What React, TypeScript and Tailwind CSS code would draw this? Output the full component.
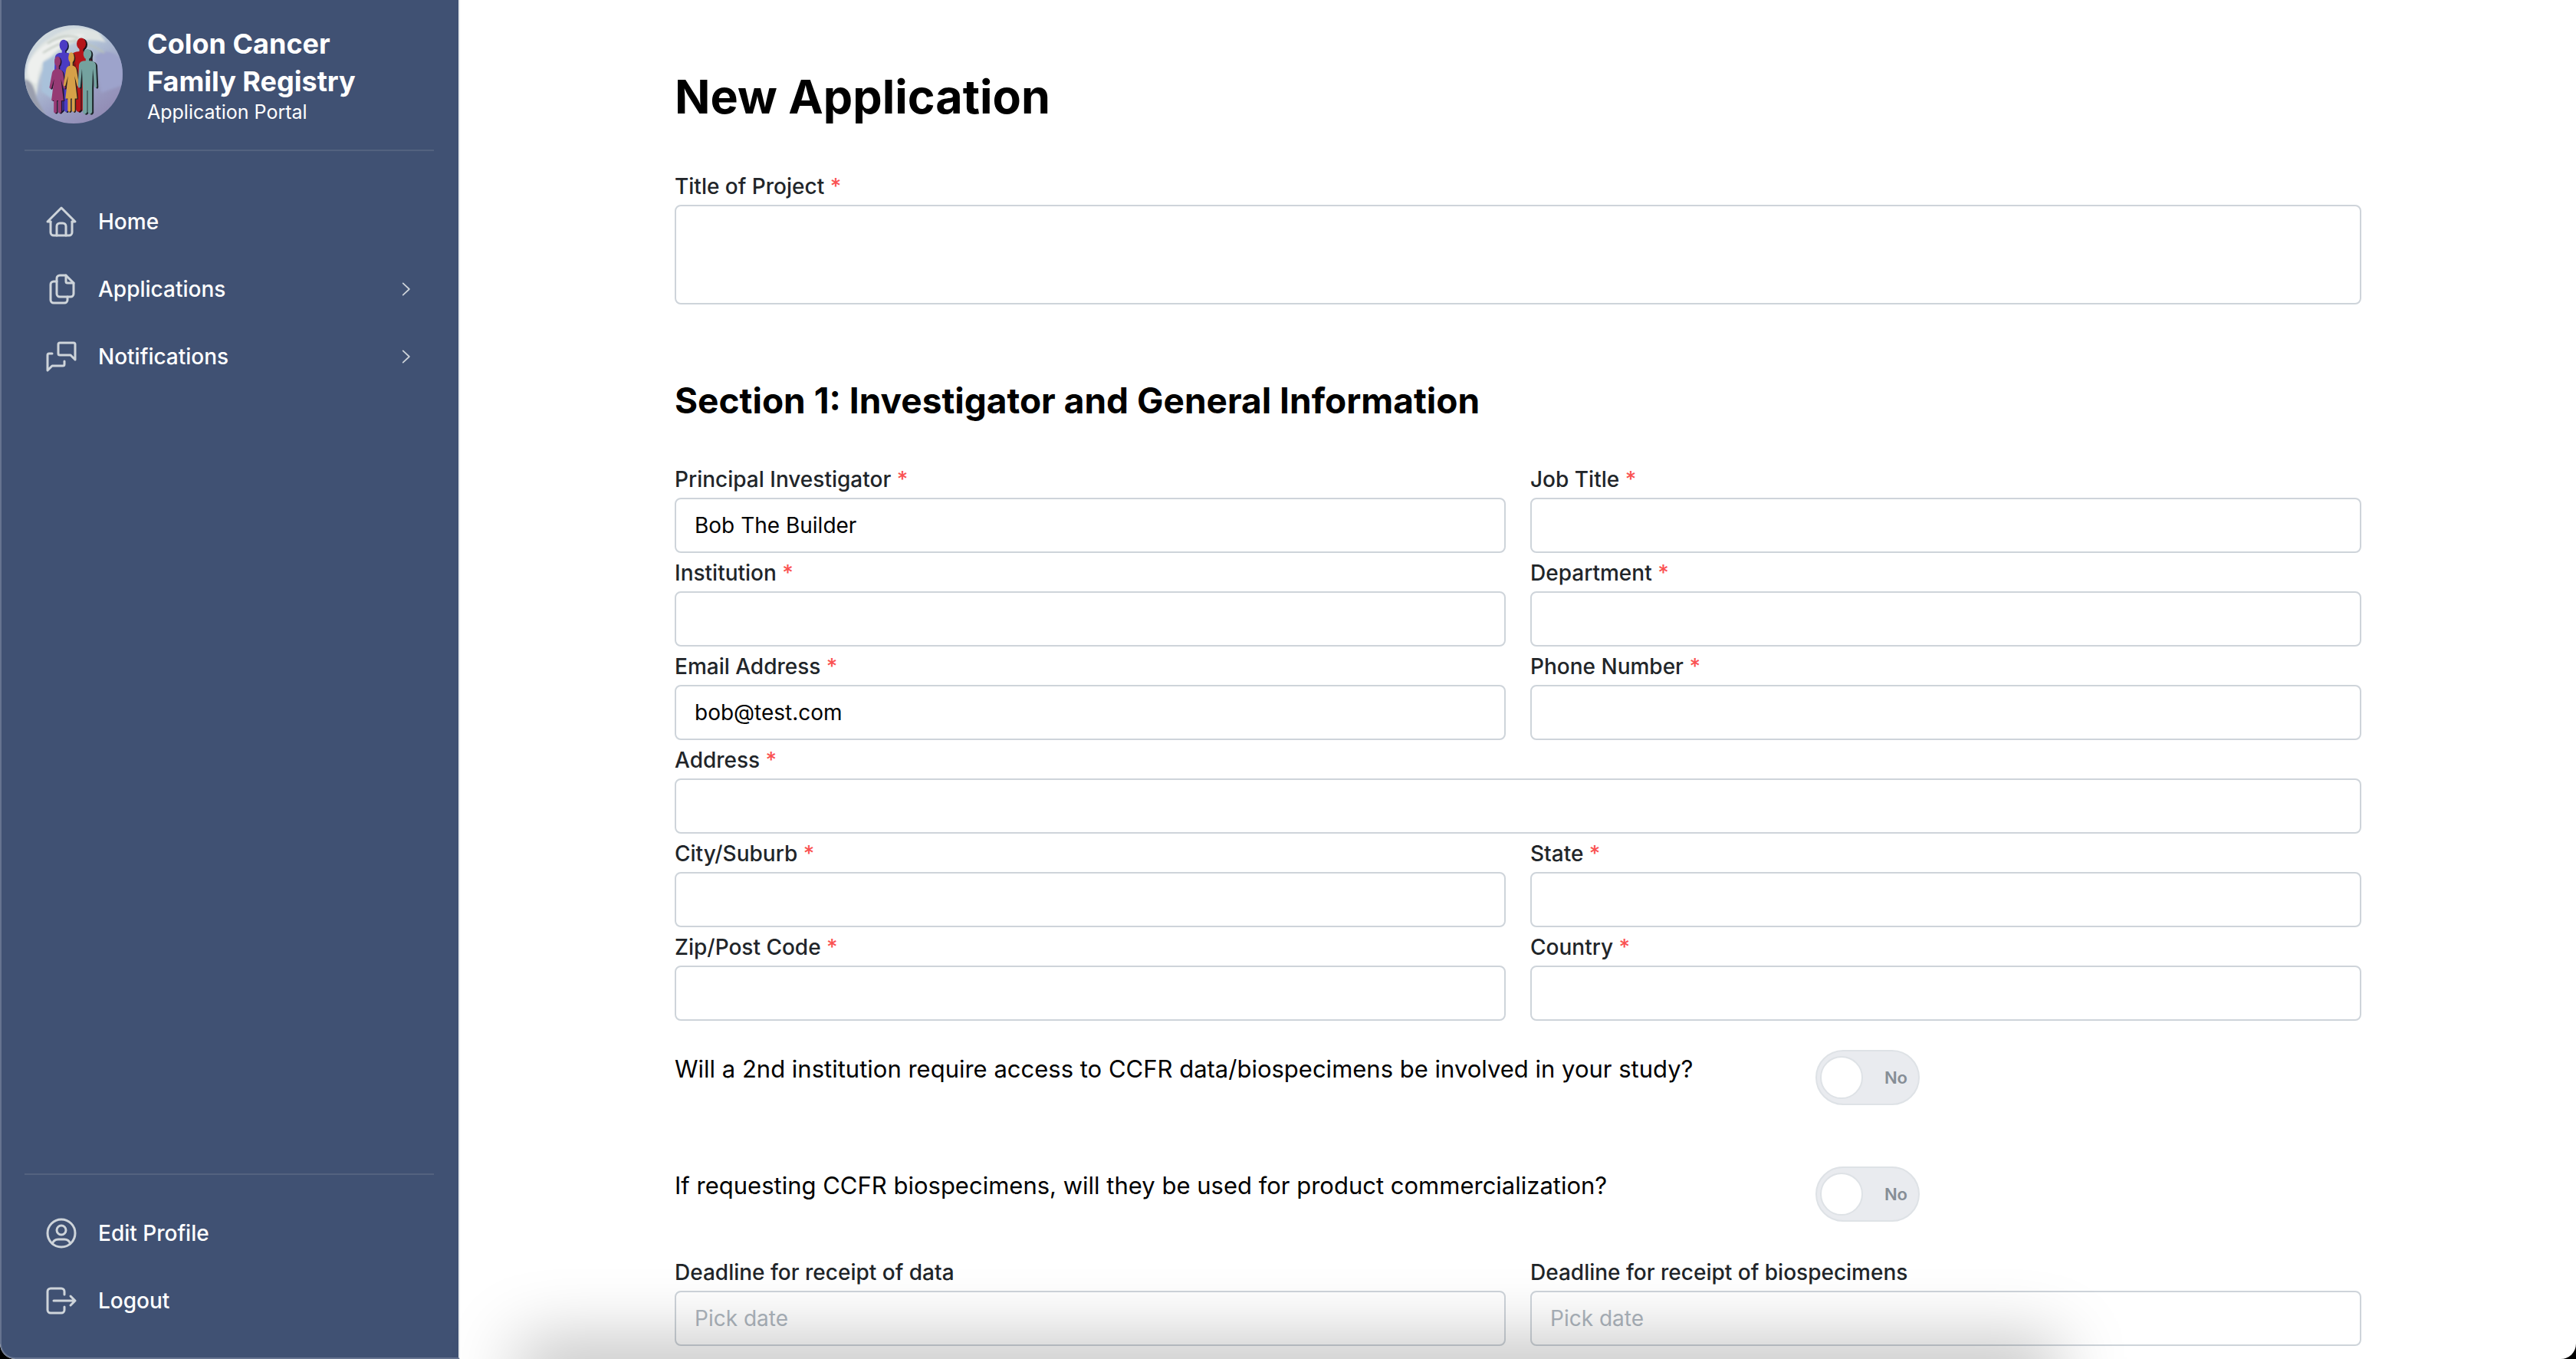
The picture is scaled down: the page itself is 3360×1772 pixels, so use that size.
import { useState } from "react";
import type { ReactNode } from "react";

function Icon({ children, className = "size-12" }: { children: ReactNode; className?: string }) {
  return (
    <svg
      viewBox="0 0 24 24"
      fill="none"
      stroke="currentColor"
      strokeWidth={1.5}
      strokeLinecap="round"
      strokeLinejoin="round"
      className={`shrink-0 text-[#ced4da] ${className}`}
      aria-hidden="true"
    >
      {children}
    </svg>
  );
}

const icons = {
  home: (
    <Icon>
      <path d="M5 12H3l9-9 9 9h-2" />
      <path d="M5 12v7a2 2 0 0 0 2 2h10a2 2 0 0 0 2-2v-7" />
      <path d="M9 21v-6a2 2 0 0 1 2-2h2a2 2 0 0 1 2 2v6" />
    </Icon>
  ),
  files: (
    <Icon>
      <path d="M15 3v4a1 1 0 0 0 1 1h4" />
      <path d="M18 17h-7a2 2 0 0 1-2-2V5a2 2 0 0 1 2-2h4l5 5v7a2 2 0 0 1-2 2z" />
      <path d="M16 17v2a2 2 0 0 1-2 2H7a2 2 0 0 1-2-2V9a2 2 0 0 1 2-2h2" />
    </Icon>
  ),
  messages: (
    <Icon>
      <path d="M21 14l-3-3h-7a1 1 0 0 1-1-1V4a1 1 0 0 1 1-1h9a1 1 0 0 1 1 1v10" />
      <path d="M14 15v2a1 1 0 0 1-1 1H6l-3 3V11a1 1 0 0 1 1-1h2" />
    </Icon>
  ),
  user: (
    <Icon>
      <circle cx="12" cy="12" r="9" />
      <circle cx="12" cy="10" r="3" />
      <path d="M6.168 18.849A4 4 0 0 1 10 16h4a4 4 0 0 1 3.834 2.855" />
    </Icon>
  ),
  logout: (
    <Icon>
      <path d="M14 8V6a2 2 0 0 0-2-2H5a2 2 0 0 0-2 2v12a2 2 0 0 0 2 2h7a2 2 0 0 0 2-2v-2" />
      <path d="M7 12h14l-3-3m0 6l3-3" />
    </Icon>
  ),
};

function Logo() {
  return (
    <svg viewBox="0 0 128 128" className="size-32 shrink-0" role="img" aria-label="Colon Cancer Family Registry">
      <defs>
        <linearGradient id="sky" x1="0.1" y1="0" x2="0.75" y2="1">
          <stop offset="0" stopColor="#dfe5e3" />
          <stop offset="0.4" stopColor="#b3c3d6" />
          <stop offset="0.7" stopColor="#9a9fc4" />
          <stop offset="1" stopColor="#9189b2" />
        </linearGradient>
        <clipPath id="disc">
          <circle cx="64" cy="64" r="64" />
        </clipPath>
        <filter id="soft" x="-20%" y="-20%" width="140%" height="140%">
          <feGaussianBlur stdDeviation="1.6" />
        </filter>
        <g id="man">
          <ellipse cx="0" cy="0" rx="6" ry="7.500" />
          <path d="M-2.500 6h5v4q9 0 10 6l1.500 32q-1 4-3.500 1l-2.500-27L7 50v36q-3 6-6.500 0V54h-1v32q-3.500 6-6.500 0V50L-8 22l-2.500 27q-2.500 3-3.500-1l1.500-32q1-6 10-6z" />
        </g>
        <g id="woman">
          <ellipse cx="0" cy="0" rx="4.500" ry="6.500" />
          <path d="M-2 5h4v5q5 1 6 5l4 19q-1 3-3 1l-4-12 4 28H5.500v15q-2 3-4.500 0V51h-2v15q-2.500 3-4.500 0V51H-9l4-28-4 12q-2 2-3-1l4-19q1-4 6-5z" />
        </g>
      </defs>
      <g clipPath="url(#disc)">
        <rect width="128" height="128" fill="url(#sky)" />
        <g filter="url(#soft)">
          <path d="M0 70Q4 32 34 16q28-20 62-8l10 14Q74 14 50 30 24 44 18 74l-4 28Q2 88 0 70z" fill="#dfe4e2" />
          <path d="M4 50Q30 8 80 12q-30 10-46 28Q18 46 16 76 2 74 4 50z" fill="#eef0ee" />
          <path d="M0 70q12 2 16 26l14 26Q2 112 0 70z" fill="#9a9fae" />
          <path d="M24 48l14-8 6 30-8 26-14-10z" fill="#a9c1da" />
          <path d="M92 40q20-14 36 8v30l-28 10z" fill="#9da3cb" />
          <path d="M30 24q20-14 40-8M24 36q24-16 44-16M78 24q12 2 26 12" stroke="#b9c2b9" strokeWidth="2" fill="none" />
        </g>
        <use href="#man" transform="translate(52.500 27) scale(0.9 0.98)" fill="#161a33" />
        <use href="#man" transform="translate(51 26) scale(0.9 0.98)" fill="#4b3bc4" />
        <use href="#man" transform="translate(76 25)" fill="#1c1018" />
        <use href="#man" transform="translate(74 24)" fill="#b5151a" />
        <use href="#woman" transform="translate(44.500 48) scale(0.88 1)" fill="#26162c" />
        <use href="#woman" transform="translate(43 47) scale(0.88 1)" fill="#963a74" />
        <use href="#woman" transform="translate(62.500 43) scale(0.85 1.05)" fill="#2a2018" />
        <use href="#woman" transform="translate(61 42) scale(0.85 1.05)" fill="#d6a048" />
        <use href="#man" transform="translate(84 38.500) scale(0.88)" fill="#1c2428" />
        <use href="#man" transform="translate(82 37.500) scale(0.88)" fill="#74a29f" />
      </g>
    </svg>
  );
}

function NavItem({ icon, label, expandable }: { icon: ReactNode; label: string; expandable?: boolean }) {
  const body = (
    <>
      {icon}
      <span className="grow text-left">{label}</span>
      {expandable && (
        <Icon className="size-7">
          <path d="M10 5.5l7 6.500-7 6.500" />
        </Icon>
      )}
    </>
  );
  const cls = "flex h-[88px] w-full items-center gap-6 px-6 text-[28px] leading-[44px] font-medium text-white";
  return (
    <li>
      {expandable ? (
        <button type="button" aria-expanded="false" className={cls}>{body}</button>
      ) : (
        <a href="#" className={cls}>{body}</a>
      )}
    </li>
  );
}

type FieldProps = {
  id: string;
  label: string;
  required?: boolean;
  value?: string;
  placeholder?: string;
  multiline?: boolean;
  wide?: boolean;
};

function Field({ id, label, required, value, placeholder, multiline, wide }: FieldProps) {
  const box =
    "block w-full rounded-lg border-2 border-[#ced4da] bg-white px-6 text-[28px] text-black placeholder:text-[#adb5bd] outline-none";
  return (
    <div className={wide ? "col-span-2" : ""}>
      <label htmlFor={id} className="block text-[28px] leading-[48px] font-medium text-[#212529]">
        {label}
        {required && <span className="text-[#fa5252]"> *</span>}
      </label>
      {multiline ? (
        <textarea id={id} defaultValue={value} className={`${box} h-[130px] resize-none`} />
      ) : (
        <input id={id} type="text" defaultValue={value} placeholder={placeholder} className={`${box} h-[72px]`} />
      )}
    </div>
  );
}

function Question({ id, text }: { id: string; text: string }) {
  const [on, setOn] = useState(false);
  return (
    <div className="grid h-[72px] grid-cols-12 gap-x-8">
      <label htmlFor={id} className="col-span-8 text-[31px] leading-[50px] text-black">
        {text}
      </label>
      <div className="relative col-span-4 h-[72px] w-[136px]">
        <input
          id={id}
          type="checkbox"
          role="switch"
          checked={on}
          onChange={() => setOn(!on)}
          className="block h-full w-full appearance-none rounded-full border-2 border-[#dee2e6] bg-[#e9ebef] checked:bg-[#228be6]"
        />
        <span
          className={`pointer-events-none absolute top-2 size-14 rounded-full border-2 border-[#dee2e6] bg-white ${on ? "right-1.5" : "left-1.5"}`}
        />
        <span
          className={`pointer-events-none absolute top-0 text-[22px] leading-[72px] font-semibold ${on ? "left-4 text-white" : "right-4 text-[#868e96]"}`}
        >
          {on ? "Yes" : "No"}
        </span>
      </div>
    </div>
  );
}

const contactFields: FieldProps[] = [
  { id: "pi", label: "Principal Investigator", value: "Bob The Builder", required: true },
  { id: "job", label: "Job Title", required: true },
  { id: "institution", label: "Institution", required: true },
  { id: "department", label: "Department", required: true },
  { id: "email", label: "Email Address", value: "bob@test.com", required: true },
  { id: "phone", label: "Phone Number", required: true },
  { id: "address", label: "Address", required: true, wide: true },
  { id: "city", label: "City/Suburb", required: true },
  { id: "state", label: "State", required: true },
  { id: "zip", label: "Zip/Post Code", required: true },
  { id: "country", label: "Country", required: true },
];

export default function App() {
  return (
    <div className="h-screen overflow-hidden bg-black font-['Inter','Liberation_Sans',sans-serif]">
      <div className="relative flex h-full overflow-hidden rounded-b-[20px] bg-white">
        <aside className="flex w-[600px] shrink-0 flex-col rounded-bl-[20px] border-r-2 border-b-2 border-l-2 border-r-[#e9ecef] border-b-[#66738f] border-l-[#66738f] bg-[#405173] pr-8 pl-[30px]">
          <div className="flex items-center gap-8 border-b-2 border-[#53627f] pt-[33px] pb-[34px] text-white">
            <Logo />
            <div className="flex flex-col">
              <span className="text-[36px] leading-[49px] font-bold">
                Colon Cancer
                <br />
                Family Registry
              </span>
              <span className="text-[25px] leading-[30px]">Application Portal</span>
            </div>
          </div>
          <nav className="mt-12 grow" aria-label="Main">
            <ul>
              <NavItem icon={icons.home} label="Home" />
              <NavItem icon={icons.files} label="Applications" expandable />
              <NavItem icon={icons.messages} label="Notifications" expandable />
            </ul>
          </nav>
          <nav className="border-t-2 border-[#53627f] pt-8 pb-[30px]" aria-label="Account">
            <ul>
              <NavItem icon={icons.user} label="Edit Profile" />
              <NavItem icon={icons.logout} label="Logout" />
            </ul>
          </nav>
        </aside>

        <main className="min-w-0 grow overflow-hidden px-8">
          <form className="mx-auto max-w-[2200px]">
            <h1 className="pt-[84px] text-[61px] leading-[84px] font-bold text-black">New Application</h1>
            <div className="mt-[51px]">
              <Field id="title" label="Title of Project" required multiline />
            </div>
            <h2 className="mt-[94px] text-[46px] leading-[62px] font-bold text-black">
              Section 1: Investigator and General Information
            </h2>
            <div className="mt-12 grid grid-cols-2 gap-x-8 gap-y-0.5">
              {contactFields.map((f) => (
                <Field key={f.id} {...f} />
              ))}
            </div>
            <div className="mt-[38px] flex flex-col gap-20">
              <Question
                id="second"
                text="Will a 2nd institution require access to CCFR data/biospecimens be involved in your study?"
              />
              <Question
                id="commercial"
                text="If requesting CCFR biospecimens, will they be used for product commercialization?"
              />
            </div>
            <div className="mt-[42px] grid grid-cols-2 gap-x-8">
              <Field id="deadline-data" label="Deadline for receipt of data" placeholder="Pick date" />
              <Field id="deadline-bio" label="Deadline for receipt of biospecimens" placeholder="Pick date" />
            </div>
          </form>
        </main>

        <div className="pointer-events-none absolute inset-x-[700px] -bottom-10 h-10 shadow-[0_0_90px_24px_rgba(0,0,0,0.25)]" />
      </div>
    </div>
  );
}
